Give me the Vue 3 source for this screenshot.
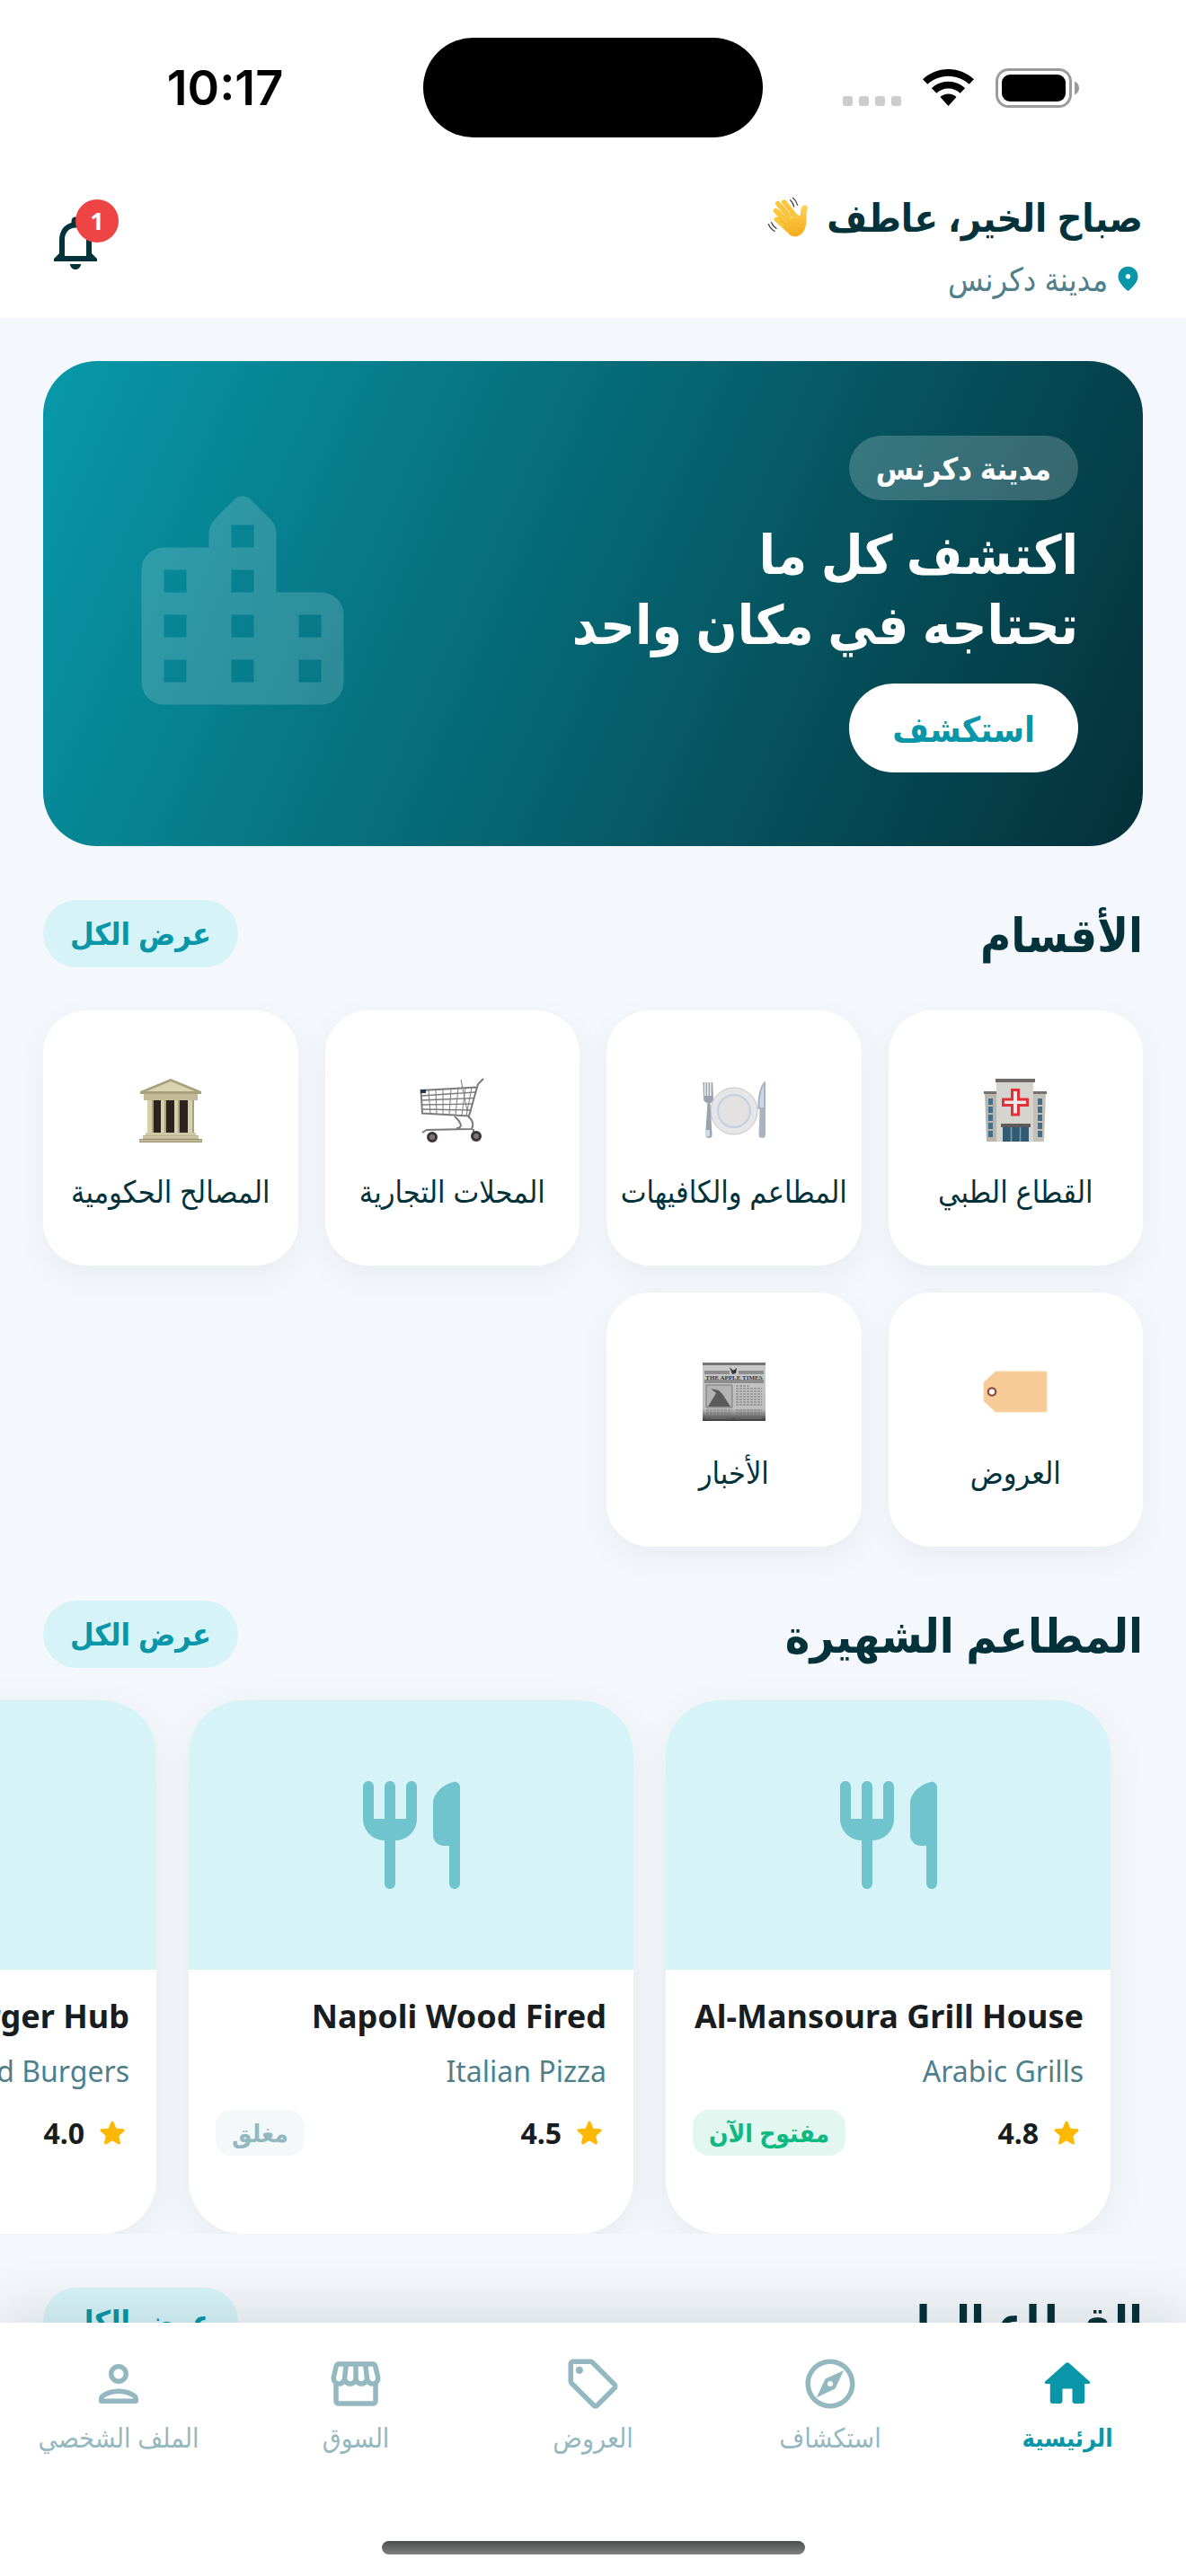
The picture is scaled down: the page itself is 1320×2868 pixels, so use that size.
<script setup>
const categories = [
  { id: 'medical', label: 'القطاع الطبي' },
  { id: 'food', label: 'المطاعم والكافيهات' },
  { id: 'shops', label: 'المحلات التجارية' },
  { id: 'gov', label: 'المصالح الحكومية' },
  { id: 'offers', label: 'العروض' },
  { id: 'news', label: 'الأخبار' },
]

const restaurants = [
  { name: 'Al-Mansoura Grill House', kind: 'Arabic Grills', rating: '4.8', open: true },
  { name: 'Napoli Wood Fired', kind: 'Italian Pizza', rating: '4.5', open: false },
  { name: 'Burger Hub', kind: 'Smashed Burgers', rating: '4.0', open: true },
]

const tabs = [
  {
    label: 'الرئيسية',
    active: true,
    path: 'M10 19v-5h4v5c0 .55.45 1 1 1h3c.55 0 1-.45 1-1v-7h1.7c.46 0 .68-.57.33-.87L12.67 3.6c-.38-.34-.96-.34-1.34 0l-8.36 7.53c-.34.3-.13.87.33.87H5v7c0 .55.45 1 1 1h3c.55 0 1-.45 1-1z',
  },
  {
    label: 'استكشاف',
    path: 'M12 2C6.48 2 2 6.48 2 12s4.48 10 10 10 10-4.48 10-10S17.52 2 12 2zm0 18c-4.41 0-8-3.59-8-8s3.59-8 8-8 8 3.59 8 8-3.59 8-8 8zm-5.5-2.5l7.51-3.49L17.5 6.5 9.99 9.99 6.5 17.5zm5.5-6.6c.61 0 1.1.49 1.1 1.1s-.49 1.1-1.1 1.1-1.1-.49-1.1-1.1.49-1.1 1.1-1.1z',
  },
  {
    label: 'العروض',
    path: 'M21.41 11.58l-9-9C12.05 2.22 11.55 2 11 2H4c-1.1 0-2 .9-2 2v7c0 .55.22 1.05.59 1.42l9 9c.36.36.86.58 1.41.58s1.05-.22 1.41-.59l7-7c.37-.36.59-.86.59-1.41s-.23-1.06-.59-1.42zM13 20.01L4 11V4h7l9 8.99-7 7.02zM8 6.5a1.5 1.5 0 1 0-3 0 1.5 1.5 0 0 0 3 0z',
  },
  {
    label: 'السوق',
    path: 'M21.9 8.89l-1.05-4.37c-.22-.9-1-1.52-1.91-1.52H5.05c-.9 0-1.69.63-1.9 1.52L2.1 8.89c-.24 1.02-.02 2.06.62 2.88.08.11.19.19.28.29V19c0 1.1.9 2 2 2h14c1.1 0 2-.9 2-2v-6.94c.09-.09.2-.18.28-.28.64-.82.87-1.87.62-2.89zm-2.99-3.9l1.05 4.37c.1.42.01.84-.25 1.17-.14.18-.44.47-.94.47-.61 0-1.14-.49-1.21-1.14L16.98 5l1.93-.01zM13 5h1.96l.54 4.52c.05.39-.07.78-.33 1.07-.22.26-.54.41-.95.41-.67 0-1.22-.59-1.22-1.31V5zM8.49 9.52L9.04 5H11v4.69c0 .72-.55 1.31-1.29 1.31-.34 0-.65-.15-.89-.41-.25-.29-.37-.68-.33-1.07zm-4.45-.16L5.05 5h1.97l-.58 4.86c-.08.65-.6 1.14-1.21 1.14-.49 0-.8-.29-.93-.47-.27-.32-.36-.75-.26-1.17zM5 19v-6.03c.08.01.15.03.23.03.87 0 1.66-.36 2.24-.95.6.6 1.4.95 2.31.95.87 0 1.65-.36 2.23-.93.59.57 1.39.93 2.29.93.84 0 1.64-.35 2.24-.95.58.59 1.37.95 2.24.95.08 0 .15-.02.23-.03V19H5z',
  },
  {
    label: 'الملف الشخصي',
    path: 'M12 6c1.1 0 2 .9 2 2s-.9 2-2 2-2-.9-2-2 .9-2 2-2m0 10c2.7 0 5.8 1.29 6 2H6c.23-.72 3.31-2 6-2m0-12C9.79 4 8 5.79 8 8s1.79 4 4 4 4-1.79 4-4-1.79-4-4-4zm0 10c-2.67 0-8 1.34-8 4v1c0 .55.45 1 1 1h14c.55 0 1-.45 1-1v-1c0-2.66-5.33-4-8-4z',
  },
]
</script>

<template>
  <div class="app" dir="rtl">
    <div class="status" dir="ltr">
      <div class="status-side"><span class="clock">10:17</span></div>
      <div class="island"></div>
      <div class="status-side indicators">
        <div class="dots"><i></i><i></i><i></i><i></i></div>
        <svg class="wifi" viewBox="0 0 57 41">
          <path d="M28.500 0C39.500 0 49.500 4.300 57 11.300l-5.400 5.500C45.600 11.200 37.500 7.700 28.500 7.700S11.400 11.200 5.400 16.800L0 11.300C7.500 4.300 17.500 0 28.500 0z" />
          <path d="M28.500 13.800c7.200 0 13.700 2.800 18.600 7.400l-5.500 5.500c-3.400-3.200-8-5.200-13.100-5.200s-9.700 2-13.100 5.200l-5.500-5.500c4.900-4.600 11.400-7.400 18.600-7.400z" />
          <path d="M28.500 27.600c3.500 0 6.600 1.300 9 3.500L28.500 41l-9-9.900c2.400-2.200 5.500-3.500 9-3.500z" />
        </svg>
        <svg class="battery" viewBox="0 0 94 44">
          <rect x="1.500" y="1.500" width="82" height="41" rx="13" fill="none" stroke="#9b9b9b" stroke-width="3" />
          <rect x="7" y="7" width="71" height="30" rx="9" />
          <path d="M88 14.500c3.200 1.300 5 4.200 5 7.500s-1.800 6.200-5 7.500z" fill="#9b9b9b" />
        </svg>
      </div>
    </div>

    <header class="header">
      <div class="hello">
        <h1 class="greeting">
          <span>صباح الخير، عاطف</span>
          <svg class="wave" viewBox="50 56 138 138" aria-hidden="true">
            <defs>
              <linearGradient id="skin" x1="0" y1="0" x2="0" y2="1">
                <stop offset="0" stop-color="#ffd257" />
                <stop offset="1" stop-color="#f5ac1c" />
              </linearGradient>
            </defs>
            <g fill="none" stroke-linecap="round">
              <g stroke="#fcc63a" stroke-width="16">
                <path d="M116 164L81 132" />
                <path d="M122 150L78 103" />
                <path d="M133 138L85 79" />
                <path d="M148 126L106 74" />
              </g>
              <path d="M88 127L112 150M88 101L122 138M98 84L136 124" stroke="#e39b1d" stroke-width="2.500" />
              <path d="M127 67c6 6 10 14 12 22M135 60c8 6 13 14 16 24M64 142c3 8 9 15 16 20M54 148c4 10 11 18 20 23" stroke="#4a4a4a" stroke-width="4" />
            </g>
            <path d="M104 152l44-36 12 3c2-14 0-32 16-35 12 1 8 14 5 26-1 10 0 18-1 30-1 28-16 50-40 49-18-1-29-22-36-37z" fill="url(#skin)" />
          </svg>
        </h1>
        <p class="place">
          <svg class="pin" viewBox="0 0 24 24">
            <path d="M12 2c-4.200 0-8 3.220-8 8.200 0 3.180 2.450 6.920 7.340 11.230.38.33.95.33 1.330 0C17.550 17.120 20 13.380 20 10.200 20 5.220 16.200 2 12 2zm0 10c-1.100 0-2-.9-2-2s.9-2 2-2 2 .9 2 2-.9 2-2 2z" />
          </svg>
          <span>مدينة دكرنس</span>
        </p>
      </div>
      <button class="bell" type="button" aria-label="الإشعارات">
        <svg viewBox="0 0 24 24">
          <path d="M12 22c1.100 0 2-.9 2-2h-4c0 1.100.9 2 2 2zm6-6v-5c0-3.070-1.630-5.640-4.500-6.320V4c0-.83-.67-1.500-1.500-1.500s-1.500.67-1.500 1.500v.68C7.640 5.360 6 7.920 6 11v5l-2 2v1h16v-1l-2-2zm-2 1H8v-6c0-2.480 1.510-4.500 4-4.500s4 2.020 4 4.500v6z" />
        </svg>
        <span class="count">1</span>
      </button>
    </header>

    <main class="content">
      <section class="hero">
        <div class="hero-text">
          <span class="hero-chip">مدينة دكرنس</span>
          <h2 class="hero-title">اكتشف كل ما<br />تحتاجه في مكان واحد</h2>
          <button class="hero-button" type="button">استكشف</button>
        </div>
        <svg class="city" viewBox="0 0 24 24">
          <path fill-rule="evenodd" d="M15 11V5.830c0-.53-.21-1.040-.59-1.410L12.700 2.710a.996.996 0 0 0-1.410 0l-1.700 1.700C9.210 4.790 9 5.300 9 5.830V7H5c-1.100 0-2 .9-2 2v10c0 1.100.9 2 2 2h14c1.100 0 2-.9 2-2v-6c0-1.100-.9-2-2-2h-4zM5 9h2v2H5zM5 13h2v2H5zM5 17h2v2H5zM11 5h2v2h-2zM11 9h2v2h-2zM11 13h2v2h-2zM11 17h2v2h-2zM17 13h2v2h-2zM17 17h2v2h-2z" />
        </svg>
      </section>

      <section>
        <div class="section-head">
          <h2>الأقسام</h2>
          <button class="all" type="button">عرض الكل</button>
        </div>
        <div class="grid">
          <a v-for="c in categories" :key="c.id" class="tile" href="#">
            <svg v-if="c.id === 'medical'" class="emoji" viewBox="0 0 72 72">
              <path d="M2 17h15v54H4z" fill="#b9b5ac" />
              <path d="M55 17h15l-2 54H55z" fill="#c3c0b8" />
              <path d="M1 15h15v3H1zM56 15h15v3H56z" fill="#77716d" />
              <path d="M15 4h41v67H15z" fill="#d6d4cf" />
              <path d="M14 1h44v4H14z" fill="#6f6a67" />
              <path d="M6 23h5v7H6zM6 32h5v7H6zM6 41h5v7H6zM6 50h5v7H6zM6 59h5v7H6zM61 23h5v7h-5zM61 32h5v7h-5zM61 41h5v7h-5zM61 50h5v7h-5zM61 59h5v7h-5z" fill="#41708c" />
              <path d="M32.500 13.500h7v10.500h10v6.500h-10V41h-7V30.500h-10V24h10z" fill="#ece9e6" stroke="#e22f38" stroke-width="3" />
              <path d="M20 51h33v4H20z" fill="#5f5a59" />
              <path d="M22 55h29v16H22z" fill="#315b73" />
              <path d="M31.500 55v16M41.500 55v16" stroke="#8b9aa2" stroke-width="1.500" />
            </svg>
            <svg v-else-if="c.id === 'food'" class="emoji" viewBox="0 0 72 72">
              <circle cx="36" cy="37" r="26" fill="#e6e6e8" stroke="#c3c7cc" />
              <circle cx="36" cy="37" r="18" fill="#dfe0e2" stroke="#c4cfdf" stroke-width="2" />
              <circle cx="36" cy="37" r="15" fill="#e3e2e1" />
              <path d="M1.500 5h1.700v15h1.300V5h1.700v15h1.300V5h1.700v15h1.300V5h1.700l.8 18c0 3-2 4.500-3.500 5l2 36c0 2-1.500 3-3.500 3s-4-1-4-3l2.500-36c-2.500-.5-4.500-2-4.500-5z" fill="#9ba3ae" />
              <path d="M4 58h5v6c0 2-5 2-5 0z" fill="#c9dcf4" />
              <path d="M71 4c-6 2-9 18-8.500 31h2L63.500 64c0 4 7.500 4 7.500 0z" fill="#a9b4c0" />
              <path d="M69 8c-3 4-4.500 16-4.500 25H69z" fill="#c9d9ea" />
            </svg>
            <svg v-else-if="c.id === 'shops'" class="emoji" viewBox="0 0 72 72">
              <g fill="none" stroke="#7b7a7d">
                <path d="M71 1l-6 6-10 35.500L3 39.500 1.500 14 63 10.500" stroke-width="2" />
                <path d="M2 20l60-4M2 25l59-2.500M2.500 30l57-1M3 35l55 1" stroke-width="1.300" />
                <path d="M10 14l2 26M18 13.500l1 26.500M26 13l0 27.500M35 12.500l-2 28.500M43 12l-3 29M51 11.500l-4 30M58 11l-6 31M46 2l7 35" stroke-width="1" />
                <path d="M39 43c7 6 10 13 2 13M54 43c6 5 6 10 4 14L8 58l-5 3M60 57v5" stroke-width="2" />
              </g>
              <path d="M1 13h6v4H1z" fill="#26384f" />
              <g fill="#7d777a" stroke="#3b3335" stroke-width="3">
                <circle cx="14" cy="66" r="4.500" />
                <circle cx="63" cy="65" r="4.500" />
              </g>
            </svg>
            <svg v-else-if="c.id === 'gov'" class="emoji" viewBox="0 0 72 72">
              <path d="M36 1l34 14v3H2v-3z" fill="#a8a07d" />
              <path d="M36 4l27 11H9z" fill="#d9d3b2" />
              <path d="M6 18h60v7H6z" fill="#c3bb98" />
              <path d="M10 25h52v37H10z" fill="#2b2320" />
              <path d="M10 25h7v37h-7zM25 25h6v37h-6zM40 25h6v37h-6zM55 25h7v37h-7z" fill="#d6cfab" />
              <path d="M15 25h2v37h-2zM29 25h2v37h-2zM44 25h2v37h-2zM60 25h2v37h-2z" fill="#a79f7e" />
              <path d="M8 61h56v3H8z" fill="#cfc8a5" />
              <path d="M5 64h62v4H5z" fill="#b9b190" />
              <path d="M1 68h70v4H1z" fill="#9c9473" />
              <path d="M5 66h62M1 70h70" stroke="#e1dabb" />
            </svg>
            <svg v-else-if="c.id === 'offers'" class="emoji" viewBox="0 0 72 72">
              <path d="M14 14h56q1 0 1 1v43q0 1-1 1H14L1 47V26z" fill="#f6cb98" stroke="#fbd9a9" />
              <circle cx="10" cy="36.500" r="4.200" fill="#fff" stroke="#8b4a3a" stroke-width="2.200" />
            </svg>
            <svg v-else class="emoji" viewBox="0 0 72 72">
              <defs>
                <linearGradient id="paper" x1="0" y1="0" x2="0" y2="1">
                  <stop offset="0" stop-color="#c9c9c9" />
                  <stop offset=".8" stop-color="#bdbdbd" />
                  <stop offset="1" stop-color="#3a3a3a" />
                </linearGradient>
              </defs>
              <path d="M1 4h70v65H1z" fill="url(#paper)" />
              <path d="M1 4h70v3H1z" fill="#747474" />
              <path d="M3 14h28M41 14h28M3 16h28M41 16h28M3 24h66M3 26h66" stroke="#555" />
              <path d="M31 9l4 4 4-3-1 6-4 1z" fill="#333" />
              <text x="36" y="22.500" text-anchor="middle" font-size="7" font-weight="700" font-family="Liberation Serif, serif" fill="#333">THE APPLE TIMES</text>
              <path d="M5 29h29v25H5z" fill="#b3b3b3" stroke="#777" />
              <path d="M7 53l9-15-6-5 9 2 4 4 9 14z" fill="#5b5b5b" />
              <path d="M38 30h15M38 33h29M38 36h29M38 39h29M38 42h29M38 45h29M38 48h29M38 51h29M5 57h29M5 60h29M5 63h29M5 66h29M38 57h29M38 60h29M38 63h29M38 66h29" stroke="#777" stroke-width="1" stroke-dasharray="3 1" />
            </svg>
            <span>{{ c.label }}</span>
          </a>
        </div>
      </section>

      <section>
        <div class="section-head">
          <h2>المطاعم الشهيرة</h2>
          <button class="all" type="button">عرض الكل</button>
        </div>
        <div class="rail">
          <article v-for="r in restaurants" :key="r.name" class="card">
            <div class="photo">
              <svg viewBox="0 0 24 24">
                <path d="M16 6v6c0 1.100.9 2 2 2h1v7c0 .55.45 1 1 1s1-.45 1-1V3.130c0-.65-.61-1.130-1.240-.98C17.600 2.680 16 4.510 16 6zm-5 3H9V3c0-.55-.45-1-1-1s-1 .45-1 1v6H5V3c0-.55-.45-1-1-1s-1 .45-1 1v6c0 2.210 1.790 4 4 4v8c0 .55.45 1 1 1s1-.45 1-1v-8c2.210 0 4-1.790 4-4V3c0-.55-.45-1-1-1s-1 .45-1 1v6z" />
              </svg>
            </div>
            <div class="info">
              <h3>{{ r.name }}</h3>
              <p class="kind">{{ r.kind }}</p>
              <div class="meta">
                <span class="rating">
                  <svg viewBox="0 0 24 24">
                    <path d="M12 17.270l4.150 2.510c.76.46 1.690-.22 1.490-1.080l-1.100-4.720 3.670-3.180c.67-.58.31-1.680-.57-1.750l-4.830-.41-1.890-4.460c-.34-.81-1.500-.81-1.840 0L9.190 8.630l-4.830.41c-.88.07-1.240 1.170-.57 1.750l3.670 3.180-1.100 4.720c-.2.86.73 1.540 1.490 1.080l4.150-2.500z" />
                  </svg>
                  <span>{{ r.rating }}</span>
                </span>
                <span class="state" :class="{ open: r.open }">{{ r.open ? 'مفتوح الآن' : 'مغلق' }}</span>
              </div>
            </div>
          </article>
        </div>
      </section>

      <section>
        <div class="section-head">
          <h2>القطاع الطبي</h2>
          <button class="all" type="button">عرض الكل</button>
        </div>
      </section>
    </main>

    <footer class="dock">
      <nav class="tabs">
        <a v-for="t in tabs" :key="t.label" href="#" class="tab" :class="{ active: t.active }">
          <svg viewBox="0 0 24 24"><path fill-rule="evenodd" :d="t.path" /></svg>
          <span>{{ t.label }}</span>
        </a>
      </nav>
      <div class="home-bar"></div>
    </footer>
  </div>
</template>

<style>
body {
  background: #f4f7fc;
}
</style>

<style scoped>
.app {
  --ink: #04323a;
  --teal: #0896a8;
  --mist: #d6f3f7;
  --muted: #4f7f8a;
  display: flex;
  flex-direction: column;
  height: 100vh;
  overflow: hidden;
  background: #f4f7fc;
  color: var(--ink);
  font-family: "Noto Sans", "DejaVu Sans Condensed", "DejaVu Sans", sans-serif;
}
.app *,
.app *::before {
  box-sizing: border-box;
}
h1,
h2,
h3,
p {
  margin: 0;
}
button {
  border: 0;
  padding: 0;
  font-family: inherit;
  cursor: pointer;
}
a {
  color: inherit;
  text-decoration: none;
}
svg {
  display: block;
  flex: none;
}

/* status bar */
.status {
  display: flex;
  align-items: center;
  justify-content: center;
  flex: none;
  height: 195px;
  padding: 0 30px;
  background: #fff;
}
.status-side {
  flex: 1;
  display: flex;
  justify-content: center;
}
.clock {
  font: 600 54px/64px Inter, sans-serif;
  color: #000;
}
.island {
  width: 378px;
  height: 111px;
  border-radius: 56px;
  background: #000;
}
.indicators {
  align-items: center;
  gap: 24px;
}
.dots {
  display: flex;
  align-items: flex-end;
  height: 41px;
  gap: 7px;
}
.dots i {
  width: 11px;
  height: 11px;
  border-radius: 3px;
  background: #ccc;
}
.wifi {
  width: 57px;
  height: 41px;
}
.battery {
  width: 94px;
  height: 44px;
}

/* greeting header */
.header {
  display: flex;
  justify-content: space-between;
  align-items: center;
  flex: none;
  height: 159px;
  padding: 0 48px 10px;
  background: #fff;
}
.greeting {
  display: flex;
  align-items: center;
  gap: 20px;
  font-size: 43px;
  line-height: 82px;
  font-weight: 700;
}
.wave {
  width: 46px;
  height: 46px;
}
.place {
  display: flex;
  align-items: center;
  gap: 6px;
  font-size: 36px;
  line-height: 56px;
  color: var(--muted);
}
.pin {
  width: 33px;
  height: 33px;
  fill: var(--teal);
}
.bell {
  position: relative;
  width: 72px;
  height: 72px;
  background: none;
}
.bell svg {
  width: 72px;
  height: 72px;
  fill: var(--ink);
}
.count {
  position: absolute;
  top: -12px;
  right: -12px;
  width: 48px;
  height: 48px;
  border-radius: 50%;
  background: #ef4444;
  color: #fff;
  font-size: 27px;
  line-height: 48px;
  font-weight: 700;
  text-align: center;
}

.content {
  flex: 1;
  min-height: 0;
  overflow: hidden;
  padding-top: 48px;
}

/* hero banner */
.hero {
  display: flex;
  justify-content: space-between;
  align-items: center;
  height: 540px;
  margin: 0 48px;
  padding: 0 72px;
  border-radius: 60px;
  background: linear-gradient(114deg, #0899aa, #043039);
}
.hero-text {
  display: flex;
  flex-direction: column;
  align-items: flex-start;
}
.hero-chip {
  padding: 0 30px;
  border-radius: 36px;
  background: rgba(255, 255, 255, 0.2);
  color: #fff;
  font-size: 34px;
  line-height: 72px;
  font-weight: 700;
}
.hero-title {
  margin: 20px 0 28px;
  color: #fff;
  font-size: 60px;
  line-height: 78px;
  font-weight: 700;
}
.hero-button {
  padding: 0 48px;
  border-radius: 50px;
  background: #fff;
  color: var(--teal);
  font-size: 39px;
  line-height: 99px;
  font-weight: 700;
}
.city {
  width: 300px;
  height: 300px;
  fill: rgba(255, 255, 255, 0.16);
}

/* section headings */
.section-head {
  display: flex;
  justify-content: space-between;
  align-items: center;
  margin: 60px 48px 0;
}
.section-head h2 {
  font-size: 52px;
  line-height: 75px;
  font-weight: 700;
}
.all {
  padding: 0 30px;
  border-radius: 38px;
  background: var(--mist);
  color: var(--teal);
  font-size: 34px;
  line-height: 75px;
  font-weight: 700;
}

/* category tiles */
.grid {
  display: grid;
  grid-template-columns: repeat(4, 1fr);
  gap: 30px;
  margin: 48px 48px 0;
}
.tile {
  display: flex;
  flex-direction: column;
  align-items: center;
  justify-content: center;
  gap: 24px;
  aspect-ratio: 1;
  padding-top: 22px;
  border-radius: 48px;
  background: #fff;
  box-shadow: 0 12px 36px rgba(4, 50, 58, 0.05);
  font-size: 34px;
  line-height: 60px;
  white-space: nowrap;
}
.emoji {
  width: 72px;
  height: 72px;
}

/* restaurant cards */
.rail {
  display: flex;
  gap: 36px;
  margin-top: 36px;
  padding: 0 84px;
  clip-path: inset(-40px 0 0 0);
}
.card {
  flex: none;
  width: 495px;
  height: 594px;
  border-radius: 60px;
  overflow: hidden;
  background: #fff;
  box-shadow: 0 12px 48px rgba(4, 50, 58, 0.06);
}
.photo {
  display: grid;
  place-items: center;
  height: 300px;
  background: var(--mist);
}
.photo svg {
  width: 144px;
  height: 144px;
  fill: #70c4ce;
}
.info {
  padding: 22px 30px 0;
}
.info h3 {
  color: #181d20;
  font-size: 36px;
  line-height: 60px;
  font-weight: 700;
  white-space: nowrap;
}
.kind {
  color: var(--muted);
  font-size: 32px;
  line-height: 62px;
}
.meta {
  display: flex;
  justify-content: space-between;
  align-items: center;
  margin-top: 12px;
}
.rating {
  display: flex;
  align-items: center;
  gap: 12px;
  color: #181d20;
  font-size: 32px;
  line-height: 51px;
  font-weight: 700;
}
.rating svg {
  width: 38px;
  height: 38px;
  fill: #ffb800;
}
.state {
  padding: 0 18px;
  border-radius: 18px;
  background: #f4f8f9;
  color: #94b8c0;
  font-size: 28px;
  line-height: 51px;
  font-weight: 700;
}
.state.open {
  background: #e1f7ef;
  color: #10b981;
}

/* bottom navigation */
.dock {
  position: relative;
  flex: none;
  background: #fff;
  box-shadow: 0 -12px 60px rgba(4, 30, 35, 0.12);
}
.tabs {
  display: flex;
  height: 243px;
  padding-top: 35px;
}
.tab {
  flex: 1;
  display: flex;
  flex-direction: column;
  align-items: center;
  gap: 3px;
  color: #94b8c0;
  font-size: 30px;
  line-height: 48px;
  white-space: nowrap;
}
.tab svg {
  width: 66px;
  height: 66px;
  fill: currentColor;
}
.tab.active {
  color: var(--teal);
  font-size: 27px;
  font-weight: 700;
}
.home-bar {
  width: 471px;
  height: 15px;
  margin: 0 auto 24px;
  border-radius: 8px;
  background: linear-gradient(#4b4f4d, #808080);
}
</style>
